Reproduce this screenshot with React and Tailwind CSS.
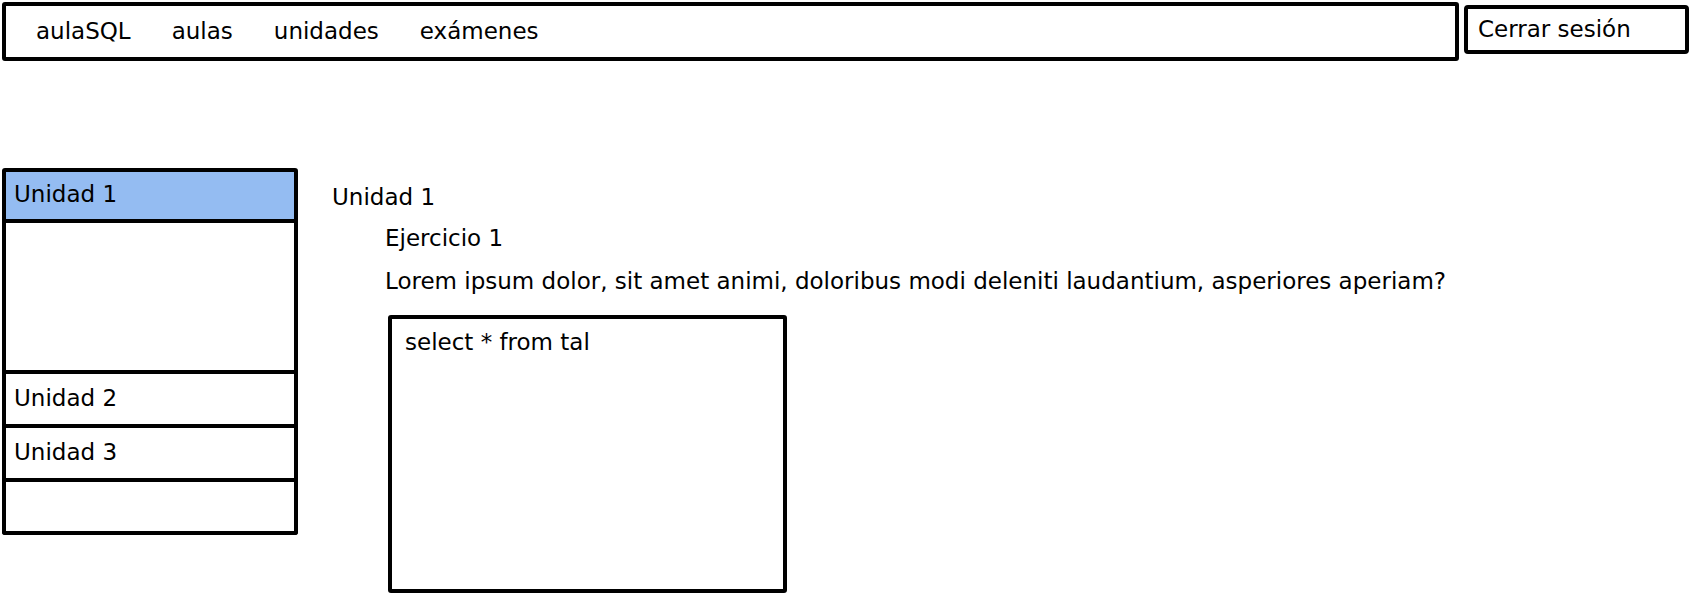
export default function App() {
  const font = { fontFamily: '"DejaVu Sans", "Noto Sans", sans-serif' };
  return (
    <div className="w-[1692px] h-[594px] overflow-hidden bg-white text-black relative" style={font}>
      {/* header */}
      <div className="flex items-start gap-[5px] pl-[2px] pt-[2px]">
        <nav className="w-[1457px] h-[59px] border-4 border-black rounded-[3px] flex items-center pl-[30px] gap-[41px] text-[23px]">
          <span>aulaSQL</span>
          <span>aulas</span>
          <span>unidades</span>
          <span>exámenes</span>
        </nav>
        <button className="mt-[3px] w-[225px] h-[49px] border-4 border-black rounded-[4px] flex items-center pl-[10px] text-[23px]">
          Cerrar sesión
        </button>
      </div>

      {/* main */}
      <div className="flex mt-[107px] pl-[2px]">
        <aside className="w-[296px] flex flex-col text-[23px]">
          <div className="h-[55px] border-4 border-black rounded-t-[3px] bg-[#94bcf2] flex items-center pl-[8px] pb-[3px]">
            Unidad 1
          </div>
          <div className="h-[151px] border-x-4 border-b-4 border-black"></div>
          <div className="h-[54px] border-x-4 border-b-4 border-black flex items-center pl-[8px] pb-[2px]">
            Unidad 2
          </div>
          <div className="h-[54px] border-x-4 border-b-4 border-black flex items-center pl-[8px] pb-[2px]">
            Unidad 3
          </div>
          <div className="h-[53px] border-x-4 border-b-4 border-black rounded-b-[3px]"></div>
        </aside>

        <section className="ml-[34px] flex flex-col text-[23px]">
          <div className="mt-[15px] h-[28px] leading-[28px]">Unidad 1</div>
          <div className="ml-[53px] mt-[13px] h-[28px] leading-[28px]">Ejercicio 1</div>
          <div className="ml-[53px] mt-[15px] h-[28px] leading-[28px] whitespace-nowrap">
            Lorem ipsum dolor, sit amet animi, doloribus modi deleniti laudantium, asperiores aperiam?
          </div>
          <div className="ml-[56px] mt-[20px] w-[399px] h-[278px] border-4 border-black rounded-[3px] pl-[13px] pt-[6px]">
            select * from tal
          </div>
        </section>
      </div>
    </div>
  );
}
